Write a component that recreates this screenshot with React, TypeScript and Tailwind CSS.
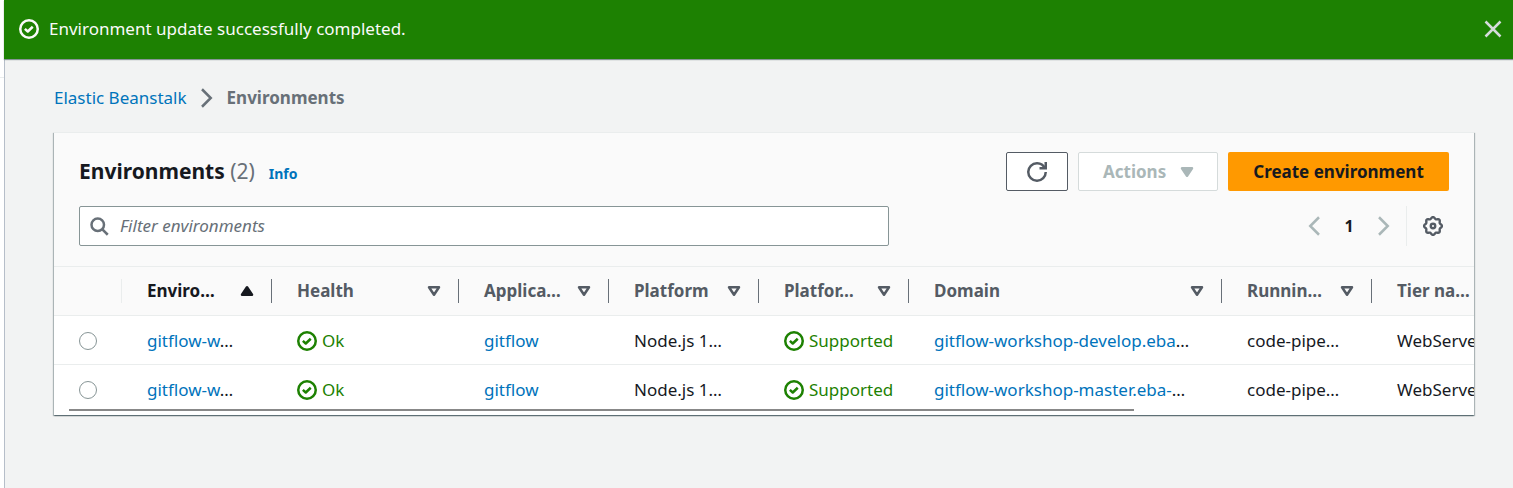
import React from "react";

const font = "font-['Noto_Sans',sans-serif]";

function StatusIcon() {
  return (
    <svg className="size-5 shrink-0" viewBox="0 0 16 16" fill="none" stroke="currentColor" strokeWidth="2" aria-hidden="true">
      <circle cx="8" cy="8" r="7" />
      <path d="m4.7 7.9 2.3 2.1 4-3.8" strokeLinejoin="round" />
    </svg>
  );
}

function Chevron({ flip = false }: { flip?: boolean }) {
  return (
    <svg className="size-5 shrink-0" viewBox="0 0 16 16" fill="none" stroke="currentColor" strokeWidth="2" aria-hidden="true">
      <path d={flip ? "M12 1 5 8l7 7" : "m4 1 7 7-7 7"} />
    </svg>
  );
}

function RefreshIcon() {
  return (
    <svg className="size-5" viewBox="0 0 16 16" fill="none" stroke="currentColor" strokeWidth="2" aria-hidden="true">
      <path d="M15 0v5h-5" />
      <path d="M15 8a6.96 6.96 0 0 1-7 7 6.96 6.96 0 0 1-7-7 6.96 6.96 0 0 1 7-7 6.87 6.87 0 0 1 6.3 4" />
    </svg>
  );
}

const gearPath = Array.from({ length: 96 }, (_, i) => {
  const a = (i / 96) * Math.PI * 2;
  const r = 6.5 + 0.65 * Math.cos(a * 8);
  return `${i ? "L" : "M"}${(8 + r * Math.cos(a)).toFixed(2)} ${(8 + r * Math.sin(a)).toFixed(2)}`;
}).join("") + "Z";

function GearIcon() {
  return (
    <svg className="size-5" viewBox="0 0 16 16" fill="none" stroke="currentColor" strokeWidth="1.9" strokeLinejoin="round" aria-hidden="true">
      <path d={gearPath} />
      <circle cx="8" cy="8" r="1.8" />
    </svg>
  );
}

function SortIcon({ active }: { active?: boolean }) {
  return (
    <svg className="size-5 shrink-0" viewBox="0 0 16 16" stroke="currentColor" strokeWidth="2" strokeLinejoin="round" aria-hidden="true">
      {active ? <path d="M4 11h8l-4-6z" fill="currentColor" /> : <path d="M4 5h8l-4 6z" fill="none" />}
    </svg>
  );
}

type Column = { label: string; width: string; sort?: "active" | "idle" };

const columns: Column[] = [
  { label: "Enviro…", width: "w-[150px]", sort: "active" },
  { label: "Health", width: "w-[187px]", sort: "idle" },
  { label: "Applica…", width: "w-[150px]", sort: "idle" },
  { label: "Platform", width: "w-[150px]", sort: "idle" },
  { label: "Platfor…", width: "w-[150px]", sort: "idle" },
  { label: "Domain", width: "w-[313px]", sort: "idle" },
  { label: "Runnin…", width: "w-[150px]", sort: "idle" },
  { label: "Tier na…", width: "w-[150px]" },
];

const rows = [
  { id: "develop", domain: "gitflow-workshop-develop.eba" },
  { id: "master", domain: "gitflow-workshop-master.eba-" },
];

const link = "text-[#0073bb] hover:underline";
const cell = "p-0 pt-0.5 pl-[25px]";

function Status({ children }: { children: React.ReactNode }) {
  return (
    <span className="flex items-center gap-[5px] text-[#1d8102]">
      <StatusIcon />
      {children}
    </span>
  );
}

export default function App() {
  return (
    <div className={`flex min-h-screen overflow-hidden bg-white text-[17px] leading-6 text-[#16191f] ${font}`}>
      <div className="w-1 shrink-0 pt-[77px]">
        <div className="h-px bg-[#eaeded]" />
      </div>
      <div className="flex min-w-0 flex-1 flex-col">
        <div role="status" className="z-10 flex h-[59px] items-center gap-2.5 bg-[#1d8102] pr-2.5 pb-0.5 pl-[15px] text-[#fafafa] shadow-[0_1px_1px_#879596]">
          <StatusIcon />
          <span className="flex-1">Environment update successfully completed.</span>
          <button type="button" aria-label="Dismiss" className="text-[#d5dbdb]">
            <svg className="size-5" viewBox="0 0 16 16" fill="none" stroke="currentColor" strokeWidth="2" aria-hidden="true">
              <path d="m2 2 12 12M14 2 2 14" />
            </svg>
          </button>
        </div>
        <main className="flex-1 border-l border-[#b6bec9] bg-[#f2f3f3] pt-[27px] pr-[39px] pl-[49px]">
          <nav aria-label="Breadcrumbs" className="flex h-6 items-center gap-2.5">
            <a href="#" className={link}>Elastic Beanstalk</a>
            <span className="text-[#687078]"><Chevron /></span>
            <span className="font-bold text-[#687078]">Environments</span>
          </nav>

          <section className="relative mt-[22px] border-t border-[#eaeded] bg-white shadow-[0_1px_1px_0_#001c244d,1px_1px_1px_0_#001c2440,-1px_1px_1px_0_#001c2440]">
            <header className="border-b border-[#eaeded] bg-[#fafafa] px-[25px] pt-[19px] pb-5">
              <div className="flex items-center gap-2.5">
                <div className="flex flex-1 items-baseline gap-3.5 pb-0.5">
                  <h1 className="text-[21px] leading-7 font-bold">
                    Environments <span className="font-normal text-[#687078]">(2)</span>
                  </h1>
                  <a href="#" className="text-sm font-bold text-[#0073bb]">Info</a>
                </div>
                <button type="button" aria-label="Refresh" className="flex h-[39px] w-[62px] items-center justify-center rounded-xs border border-[#545b64] bg-white text-[#545b64]">
                  <RefreshIcon />
                </button>
                <button type="button" disabled className="flex h-[39px] w-[140px] items-center justify-between rounded-xs border border-[#d5dbdb] bg-white pr-5 pl-6 font-bold text-[#aab7b8]">
                  Actions
                  <svg className="size-5" viewBox="0 0 16 16" fill="currentColor" stroke="currentColor" strokeWidth="2" strokeLinejoin="round" aria-hidden="true">
                    <path d="M4 5h8l-4 6z" />
                  </svg>
                </button>
                <button type="button" className="h-[39px] w-[221px] rounded-xs bg-[#ff9900] font-bold">Create environment</button>
              </div>
              <div className="mt-[15px] flex items-center justify-between">
                <label className="flex h-10 w-[810px] items-center gap-[11px] rounded-xs border border-[#879596] bg-white px-[9px] text-[#687078]">
                  <svg className="size-5 shrink-0" viewBox="0 0 16 16" fill="none" stroke="currentColor" strokeWidth="2" aria-label="Search">
                    <circle cx="7" cy="7" r="5" />
                    <path d="m15 15-4.5-4.5" />
                  </svg>
                  <input type="text" aria-label="Filter environments" placeholder="Filter environments" className="min-w-0 flex-1 bg-transparent outline-none placeholder:text-[#687078] placeholder:italic" />
                </label>
                <div className="flex h-10 items-center">
                  <button type="button" disabled aria-label="Previous page" className="text-[#aab7b8]"><Chevron flip /></button>
                  <button type="button" aria-label="Page 1" className="w-[50px] text-base font-bold">1</button>
                  <button type="button" disabled aria-label="Next page" className="text-[#aab7b8]"><Chevron /></button>
                  <div className="ml-3 flex h-full items-center border-l border-[#eaeded] pr-1.5 pl-4">
                    <button type="button" aria-label="Preferences" className="text-[#545b64]"><GearIcon /></button>
                  </div>
                </div>
              </div>
            </header>

            <div className="overflow-hidden pb-0.5">
              <table className="w-[1468px] table-fixed border-collapse whitespace-nowrap">
                <thead>
                  <tr className="h-12 border-b border-[#eaeded] bg-[#fafafa] text-left text-[#545b64]">
                    <th aria-label="Selection" className="w-[68px] p-0">
                      <div className="h-6 border-r border-[#eaeded]" />
                    </th>
                    {columns.map((c) => (
                      <th key={c.label} className={`p-0 font-bold ${c.width}`} aria-sort={c.sort === "active" ? "ascending" : undefined}>
                        <div className={`flex h-6 items-center justify-between border-r border-[#687078] pr-3.5 pl-[25px] ${c.sort === "active" ? "text-[#16191f]" : ""}`}>
                          {c.label}
                          {c.sort && <SortIcon active={c.sort === "active"} />}
                        </div>
                      </th>
                    ))}
                  </tr>
                </thead>
                <tbody>
                  {rows.map((r) => (
                    <tr key={r.id} className="h-[49px] border-b border-[#eaeded] last:border-0">
                      <td className={cell}>
                        <input type="radio" name="environment" aria-label={`Select ${r.id}`} className="block size-[18px] appearance-none rounded-full border border-[#879596] bg-white" />
                      </td>
                      <td className={cell}><a href="#" className={link}>gitflow-w</a>…</td>
                      <td className={cell}><Status>Ok</Status></td>
                      <td className={cell}><a href="#" className={link}>gitflow</a></td>
                      <td className={cell}>Node.js 1…</td>
                      <td className={cell}><Status>Supported</Status></td>
                      <td className={cell}><a href="#" className={link}>{r.domain}</a>…</td>
                      <td className={cell}>code-pipe…</td>
                      <td className={cell}>WebServer</td>
                    </tr>
                  ))}
                </tbody>
              </table>
            </div>
            <div className="absolute bottom-1 left-[15px] h-0.5 w-3/4 bg-[#888888]" />
          </section>
        </main>
      </div>
    </div>
  );
}
